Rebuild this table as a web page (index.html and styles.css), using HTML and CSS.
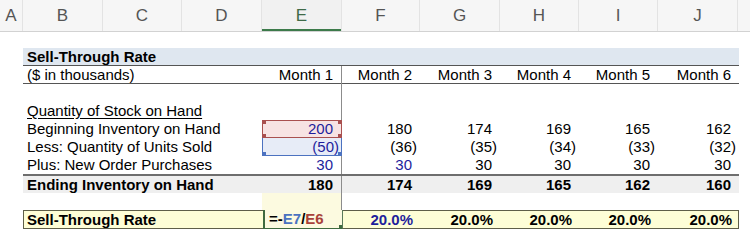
FILE: index.html
```html
<!DOCTYPE html>
<html>
<head>
<meta charset="utf-8">
<link rel="stylesheet" href="styles.css">
</head>
<body>
<div class="colhdr">
  <div class="ch w-a">A</div>
  <div class="ch w-b">B</div>
  <div class="ch w-c">C</div>
  <div class="ch w-d">D</div>
  <div class="ch w-e sel">E</div>
  <div class="ch w-f">F</div>
  <div class="ch w-g">G</div>
  <div class="ch w-h">H</div>
  <div class="ch w-i">I</div>
  <div class="ch w-j">J</div>
  <div class="ch w-k"></div>
</div>

<div class="sheet">
  <div class="row title"><div class="lbl bold">Sell-Through Rate</div></div>

  <div class="row sub">
    <div class="lbl">($ in thousands)</div>
    <div class="c e">Month 1</div>
    <div class="c">Month 2</div>
    <div class="c">Month 3</div>
    <div class="c">Month 4</div>
    <div class="c">Month 5</div>
    <div class="c">Month 6</div>
  </div>

  <div class="row">
    <div class="lbl"></div>
    <div class="c e"></div>
  </div>

  <div class="row">
    <div class="lbl"><span class="u">Quantity of Stock on Hand</span></div>
    <div class="c e"></div>
  </div>

  <div class="row">
    <div class="lbl">Beginning Inventory on Hand</div>
    <div class="c e blue ref-red">200</div>
    <div class="c">180</div>
    <div class="c">174</div>
    <div class="c">169</div>
    <div class="c">165</div>
    <div class="c">162</div>
  </div>

  <div class="row">
    <div class="lbl">Less: Quantity of Units Sold</div>
    <div class="c e blue neg ref-blue">(50)</div>
    <div class="c neg">(36)</div>
    <div class="c neg">(35)</div>
    <div class="c neg">(34)</div>
    <div class="c neg">(33)</div>
    <div class="c neg">(32)</div>
  </div>

  <div class="row">
    <div class="lbl">Plus: New Order Purchases</div>
    <div class="c e blue">30</div>
    <div class="c blue">30</div>
    <div class="c">30</div>
    <div class="c">30</div>
    <div class="c">30</div>
    <div class="c">30</div>
  </div>

  <div class="row total">
    <div class="lbl bold">Ending Inventory on Hand</div>
    <div class="c e bold">180</div>
    <div class="c bold">174</div>
    <div class="c bold">169</div>
    <div class="c bold">165</div>
    <div class="c bold">162</div>
    <div class="c bold">160</div>
  </div>

  <div class="row gap">
    <div class="lbl"></div>
    <div class="c e pale"></div>
  </div>

  <div class="row rate">
    <div class="lbl bold">Sell-Through Rate</div>
    <div class="c e edit bold">=-<span class="fb">E7</span>/<span class="fr">E6</span></div>
    <div class="c bold blue">20.0%</div>
    <div class="c bold">20.0%</div>
    <div class="c bold">20.0%</div>
    <div class="c bold">20.0%</div>
    <div class="c bold">20.0%</div>
  </div>
</div>
</body>
</html>
```

FILE: styles.css
```css
html, body {
  margin: 0;
  padding: 0;
  background: #ffffff;
}

body {
  width: 750px;
  height: 250px;
  overflow: hidden;
  font-family: "Liberation Sans", Arial, sans-serif;
  font-size: 15px;
  color: #000;
}

/* column header strip */
.colhdr {
  display: flex;
  height: 32px;
  background: #f6f6f6;
  border-bottom: 1px solid #d2d2d2;
  box-sizing: border-box;
}

.ch {
  box-sizing: border-box;
  border-right: 1px solid #e3e3e3;
  display: flex;
  align-items: center;
  justify-content: center;
  font-size: 17px;
  color: #555;
  flex: none;
}

.ch.sel {
  color: #3f6a48;
  background: #f1f1f1;
  box-shadow: inset 0 -2px 0 #3c7a4a;
}

.w-a { width: 23px; }
.w-b { width: 80px; }
.w-c { width: 79px; }
.w-d { width: 80px; }
.w-e { width: 80px; }
.w-f { width: 78px; }
.w-g { width: 80px; }
.w-h { width: 79px; }
.w-i { width: 79px; }
.w-j { width: 80px; }
.w-k { flex: 1; border-right: none; }

/* sheet body */
.sheet {
  margin: 16px 0 0 23px;
  width: 716px;
}

.row {
  display: grid;
  grid-template-columns: 239px 80px 78px 80px 79px 79px 81px;
  height: 18px;
  line-height: 18px;
  box-sizing: border-box;
}

.lbl {
  padding-left: 4px;
  white-space: nowrap;
}

.c {
  box-sizing: border-box;
  text-align: right;
  padding-right: 8px;
  white-space: nowrap;
  height: 18px;
}

.c.e {
  border-right: 1px solid #8c8c8c;
  padding-right: 8px;
}

.bold { font-weight: bold; }
.u { text-decoration: underline; text-underline-offset: 2px; }
.blue { color: #1e1e9c; }

.c.neg { padding-right: 3px; }
.c.e.neg { padding-right: 2px; }

.title {
  background: #dfe7f0;
  border-bottom: 1px solid #555;
  grid-template-columns: 1fr;
}

.sub {
  border-bottom: 1px solid #555;
}

/* referenced cells while editing */
.ref-red {
  border: 1px solid #a9504f;
  background-color: #f7e3e3;
  background-image:
    linear-gradient(#a9504f, #a9504f),
    linear-gradient(#a9504f, #a9504f),
    linear-gradient(#a9504f, #a9504f),
    linear-gradient(#a9504f, #a9504f);
  background-size: 4px 4px;
  background-repeat: no-repeat;
  background-origin: border-box;
  background-position: 0 0, 100% 0, 0 100%, 100% 100%;
  line-height: 16px;
}

.c.e.ref-red { border-right: 1px solid #a9504f; }

.ref-blue {
  border: 1px solid #4c72c0;
  border-top: none;
  background-color: #e7ecf7;
  background-image:
    linear-gradient(#4c72c0, #4c72c0),
    linear-gradient(#4c72c0, #4c72c0);
  background-size: 4px 4px;
  background-repeat: no-repeat;
  background-origin: border-box;
  background-position: 0 100%, 100% 100%;
  line-height: 17px;
}

.c.e.ref-blue { border-right: 1px solid #4c72c0; }

.total {
  background: #efefef;
  border-top: 2px solid #6e6e6e;
  height: 19px;
  line-height: 17px;
}

.gap { height: 17px; }

.c.pale {
  background: #fcfae0;
  height: 17px;
}

.rate {
  background: #fefed6;
  border: 1px solid #5f5f48;
  height: 19px;
  line-height: 17px;
}

.rate .lbl { padding-left: 3px; }

.c.edit {
  text-align: left;
  padding-left: 4px;
  background-color: #fcfae0;
  border-left: 2px solid #3f6a3f;
  border-right: 1px solid #5a7a5a;
  border-bottom: 1px solid #3f6a3f;
  margin-top: -1px;
  height: 19px;
  background-image: linear-gradient(#3f6a3f, #3f6a3f);
  background-size: 4px 4px;
  background-repeat: no-repeat;
  background-origin: border-box;
  background-position: 100% 100%;
}

.fb { color: #4a72c0; }
.fr { color: #a8413a; }
```
